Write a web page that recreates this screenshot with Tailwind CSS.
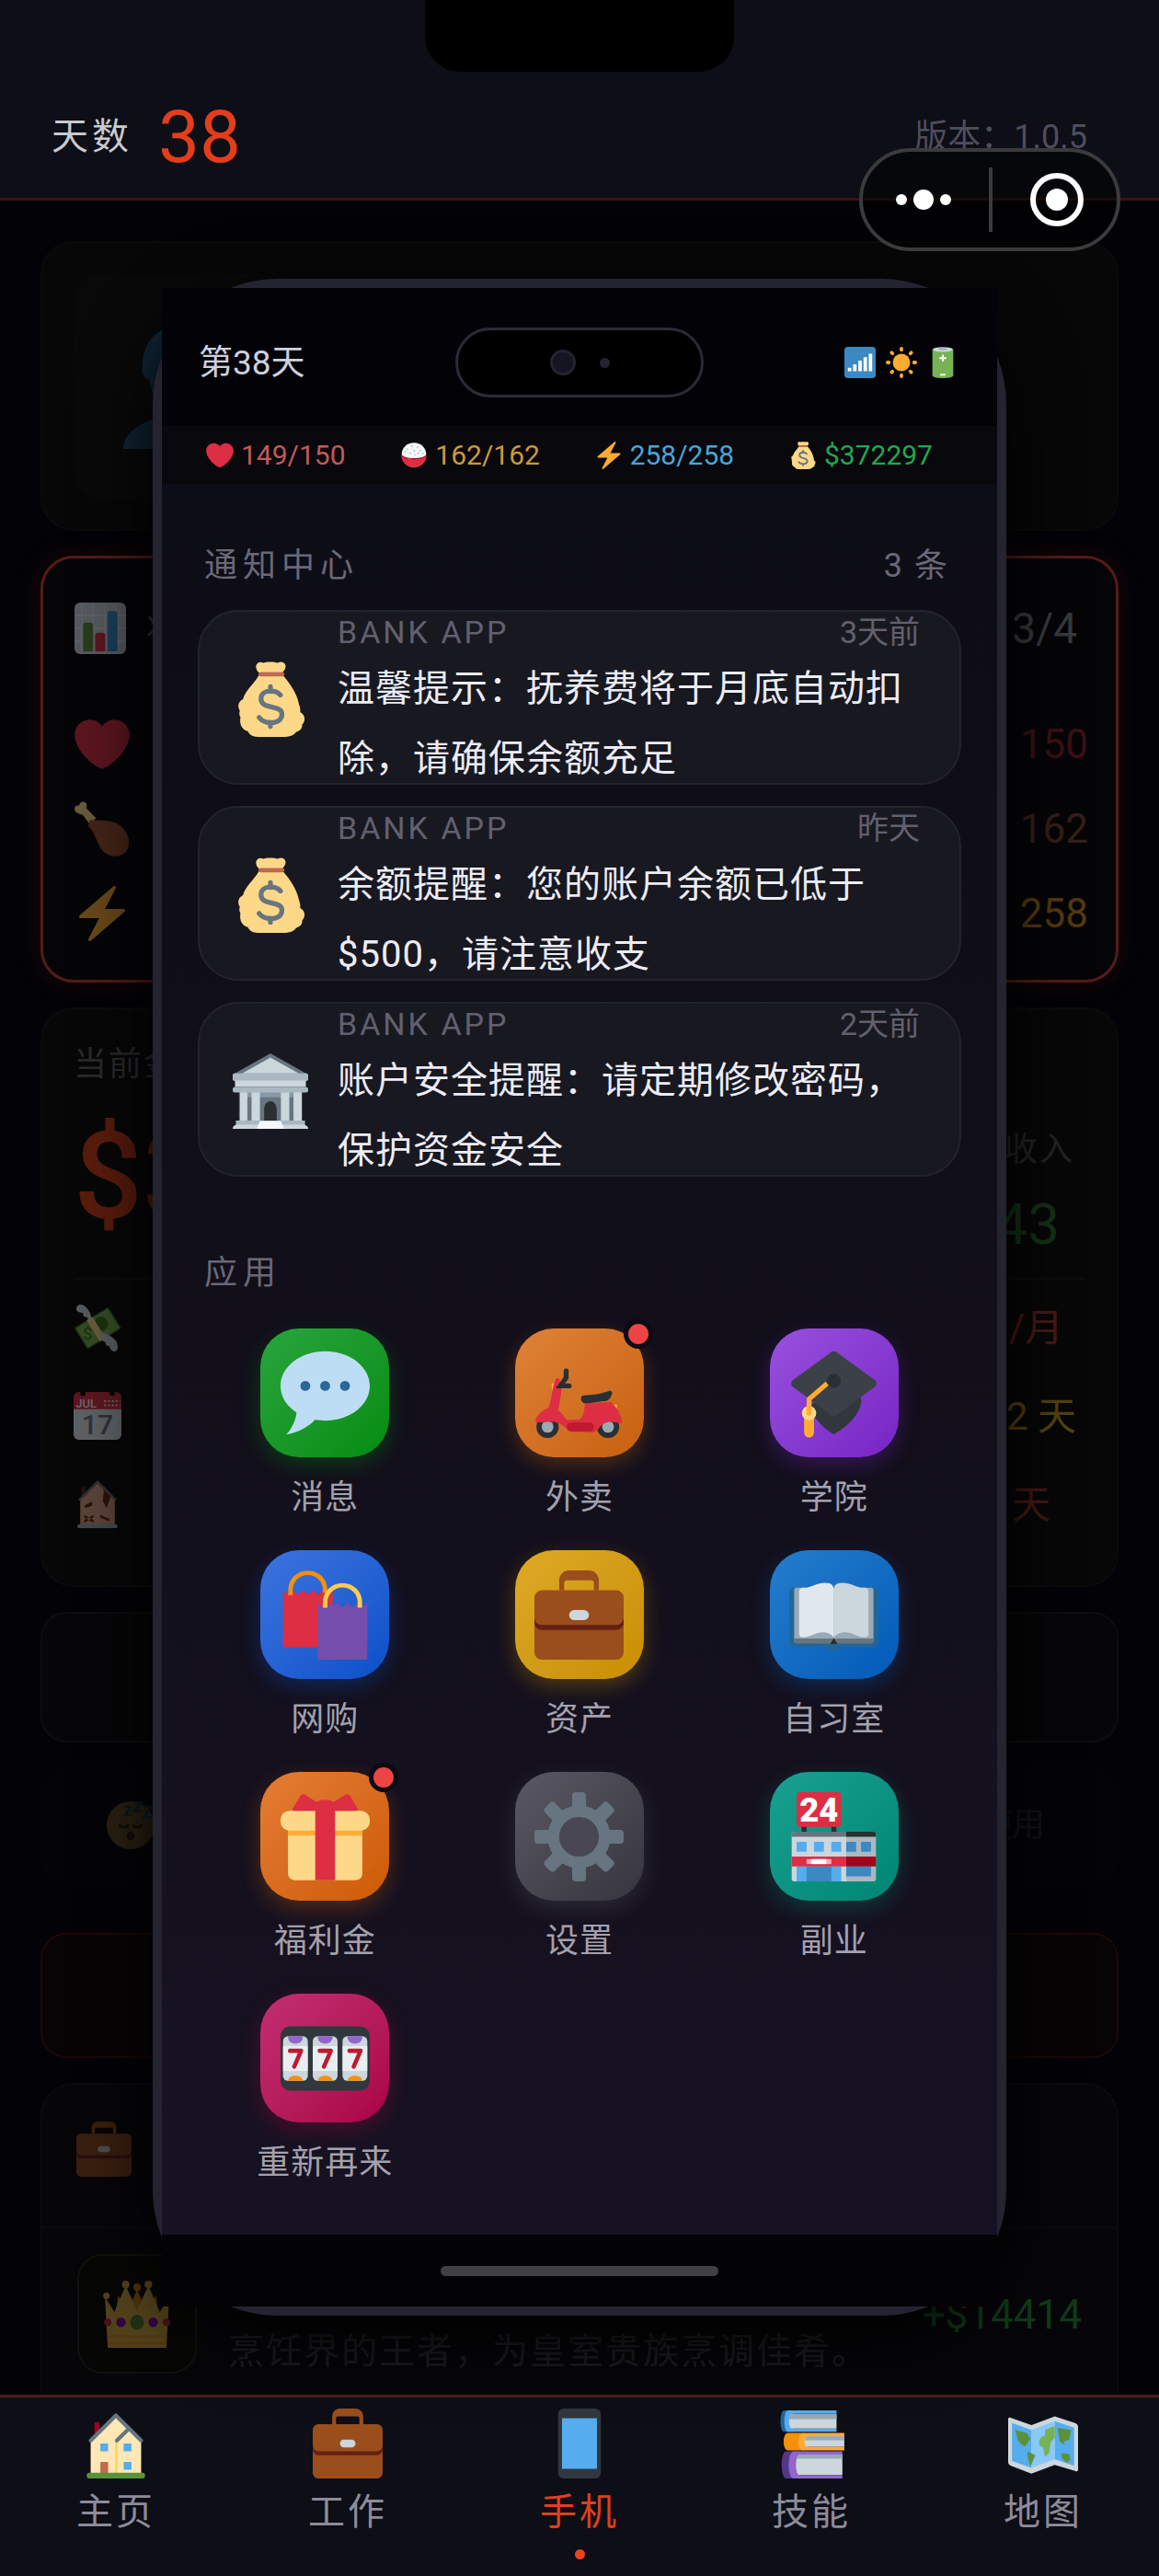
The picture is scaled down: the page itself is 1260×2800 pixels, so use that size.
<!DOCTYPE html>
<html lang="zh-CN">
<head>
<meta charset="utf-8">
<meta name="viewport" content="width=device-width, initial-scale=1">
<title>手机</title>
<script src="https://cdn.jsdelivr.net/npm/@tailwindcss/browser@4"></script>
</head>
<body class="bg-[#030307] font-[Roboto,'Noto_Sans_CJK_SC',sans-serif]">

<!-- Icon library -->
<svg class="hidden" aria-hidden="true">
  <symbol id="heart" viewBox="0 0 36 36"><path fill="#DD2E44" d="M35.885 11.833c0-5.45-4.418-9.868-9.867-9.868-3.308 0-6.227 1.633-8.018 4.129-1.791-2.496-4.71-4.129-8.017-4.129-5.45 0-9.868 4.417-9.868 9.868 0 .772.098 1.52.266 2.241C1.751 22.587 11.216 31.568 18 34.034c6.783-2.466 16.249-11.447 17.617-19.959.17-.721.268-1.469.268-2.242z"/></symbol>
  <symbol id="bolt" viewBox="0 0 36 36"><path fill="#FFAC33" d="M32.938 15.651C32.792 15.26 32.418 15 32 15H19.925L26.89 1.458c.219-.426.106-.947-.271-1.243C26.437.071 26.218 0 26 0c-.233 0-.466.082-.653.243L18 6.588 3.347 19.243c-.316.273-.43.714-.284 1.105S3.582 21 4 21h12.075L9.11 34.542c-.219.426-.106.947.271 1.243.182.144.401.215.619.215.233 0 .466-.082.653-.243L18 29.412l14.653-12.655c.317-.273.43-.714.285-1.106z"/></symbol>
  <symbol id="bag" viewBox="0 0 36 36"><path fill="#FDD888" d="M31.500 20c-.6-4-4-9.500-7.500-13.300H12.400C10.400 10.500 5.900 13.800 4.900 18c-2.300 1.200-2.800 3.500-1.500 5.600-.4 1.200-.3 2 .3 3-.6 3.300.6 5.900 3.500 6.700C8 35 9.500 36 12 36h13c2.500 0 4.300-1 5.300-2.400 1.900-.5 3-1.800 2.800-3.400 1.800-1.900 1.600-4.600-.9-6 .2-1.500-.2-2.800-.7-4.200z"/><path fill="#FDD888" d="M12.600 5.400c-1-.7-1.700-2.100-1.400-3.500C11.500.4 13.300-.2 14.600.7c.9-.7 5.800-.7 6.800 0 1.500-1 3.500-.5 3.800 1.200.2 1.400-.6 2.500-1.600 3.500z"/><path fill="#BF6952" d="M13.500 5h10c.7 0 1.200.4 1.200 1s-.5 1.100-1.200 1.100h-10c-.7 0-1.200-.5-1.200-1.100s.5-1 1.200-1z"/><path fill="none" stroke="#67757F" stroke-width="2.300" stroke-linecap="round" d="M18 12v2.300M18 29v2M22.800 16c-1.100-1.300-2.700-1.900-4.800-1.900-2.600 0-4.500 1.300-4.500 3.700 0 5.600 10 2.400 10 7.400 0 2.500-2.200 4-5.300 4-2.600 0-4.500-.9-5.600-2.500"/></symbol>
  <symbol id="rice" viewBox="0 0 36 36"><path fill="#F5F8FA" d="M2 17C2 8 9 1.500 18 1.500S34 8 34 17c0 4-7 6-16 6S2 21 2 17z"/><path fill="#DD2E44" d="M1.500 17.500C4 21 10 22.800 18 22.800s14-1.800 16.500-5.300C34.500 26 28 34 18 34S1.500 26 1.500 17.500z"/><path fill="#A0041E" d="M1.500 16.500C4 20 10 21.600 18 21.600s14-1.600 16.500-5.100v1.800C32 21.400 26 23 18 23S4 21.400 1.500 18.300z"/><path stroke="#AAB8C2" stroke-width="1.300" stroke-linecap="round" d="M9 9l1 1.500M16 5l-1 1.500M22 7h2M27 11l-1 1.500M18 11l1 1.500M12 15h2M6 14l1-1.500M24 16l-1-1.500M19 17h1M29 16l1-1"/></symbol>
  <symbol id="bank" viewBox="0 0 36 36"><path fill="#66757F" d="M1 9.500 18 0l17 9.500z"/><path fill="#CCD6DD" d="M4.500 9.500 18 2l13.500 7.500z"/><path fill="#66757F" d="M3 17h30v16H3z"/><path fill="#8899A6" d="M7 18h22v3H7z"/><path fill="#CCD6DD" d="M3.500 18H7v14.500H3.500zM9 18h4v14.500H9zM23 18h4v14.500h-4zM29 18h4v14.500h-4z"/><path fill="#292F33" d="M15 33v-6.500a3 3.700 0 0 1 6 0V33z"/><path fill="#CCD6DD" d="M0 10.600c0-.6.400-1 1-1h34c.6 0 1 .4 1 1v1.600c0 .6-.4 1-1 1h-.1V16H1.100v-2.800C.4 13.200 0 12.800 0 12.200z"/><path fill="#AAB8C2" d="M0 10.600c0-.6.400-1 1-1h34c.6 0 1 .4 1 1v1.400c0 .6-.4 1-1 1H1c-.6 0-1-.4-1-1zM0 17c0-.6.400-1 1-1h34c.6 0 1 .4 1 1v.7c0 .6-.4 1-1 1H1c-.6 0-1-.4-1-1z"/><path fill="#AAB8C2" d="M1.500 32h33v2.500h-33z"/><path fill="#CCD6DD" d="M0 35.500C.5 34.300 1.500 34 2.500 34h31c1 0 2 .3 2.500 1.500v.5H0z"/><path fill="#F5F8FA" d="M13 32.300h10l1.500 3.700h-13z"/></symbol>
  <symbol id="chat" viewBox="0 0 36 36"><path fill="#BDDDF4" d="M18 1C8.060 1 0 7.270 0 15c0 4.300 2.500 8.150 6.400 10.700C6.500 28 4.500 32.500 2.300 34.600c4-.5 8.900-2.900 11.600-5.900 1.300.2 2.700.3 4.100.3 9.940 0 18-6.270 18-14S27.940 1 18 1z"/><circle fill="#2A6797" cx="10" cy="15" r="2"/><circle fill="#2A6797" cx="18" cy="15" r="2"/><circle fill="#2A6797" cx="26" cy="15" r="2"/></symbol>
  <symbol id="scooter" viewBox="0 0 36 36"><circle fill="#292F33" cx="5.300" cy="31.500" r="4.500"/><circle fill="#99AAB5" cx="5.300" cy="31.500" r="2.400"/><circle fill="#292F33" cx="29.700" cy="31.500" r="4.500"/><circle fill="#99AAB5" cx="29.700" cy="31.500" r="2.400"/><path fill="#FFAC33" d="M7 14h2v2.500H7zM31 22.500h2.300v1.800H31z"/><path fill="#DD2E44" d="M8.600 12.300c.6-.8 1.600-.4 1.600.5l.8 3.700-1.400 8.500c1.300.6 2.500 2.800 3.500 3.700h4c2.700 0 3-3.200 3.300-6.700l10.400-.5c2.400 1.900 4.200 5 4.700 8.600l-2.800-.4c-3-.6-5 .1-7 2.700-1.700 2-3 1.200-5 1.200h-6c-2-1.500-3.500-3.500-6.500-4-2.500-.4-5 .3-7.800.1 0-3 3-5 5.300-5.900.7-1.600 1.500-6 1.900-8.700z"/><rect fill="#BE1931" x="13" y="29.800" width="11" height="3.500" rx="1.700"/><path fill="#292F33" d="M20 18.800c3.500 0 7-.5 10-1.700 1-.3 1.600.3 1.300 1.200-.6 1.800-1.500 2.800-3 2.900-3 .2-4.500.8-7.500.8-1.300 0-2-.7-2-1.700 0-1 .4-1.500 1.200-1.500z"/><path fill="none" stroke="#292F33" stroke-width="2" stroke-linecap="round" d="M12.800 9v2.700L10.500 15H14"/></symbol>
  <symbol id="cap" viewBox="0 0 36 36"><path fill="#31373D" d="M8 23l10-7 11 4c.5 5-4 10.500-11 14.500-4-2.200-8-6-10-11.500z"/><path fill="#3B4147" d="M16.800 1.500a1.700 1.700 0 0 1 2.400 0L34.600 12.700c.8.700.8 1.900 0 2.600L19.200 26.700c-.8.500-1.700.500-2.400 0L1.400 15.300c-.8-.7-.8-1.900 0-2.600z"/><circle fill="#292F33" cx="18" cy="13" r="2.800"/><path fill="none" stroke="#FFAC33" stroke-width="1.900" stroke-linejoin="round" d="M15.300 14 8 20.300V27"/><path fill="#FFAC33" d="M6 28h4v5.800a2 2 0 0 1-4 0z"/><circle fill="#FFD983" cx="8" cy="26" r="2.900"/><path fill="#FFAC33" d="M7 22h2v4a1 1 0 0 1-2 0z"/></symbol>
  <symbol id="shop" viewBox="0 0 36 36"><path fill="#DD2E44" d="M1 8l2 1.800L5 8l2 1.800L9 8l2 1.800L13 8l2 1.800L17 8l2 1.800L21 8v23H1z"/><path fill="none" stroke="#F4900C" stroke-width="1.800" d="M4 10V8C4 4 7 1 11 1s7 3 7 7v1"/><path fill="#744EAA" d="M15 13l2 1.800L19 13l2 1.800L23 13l2 1.800L27 13l2 1.800L31 13l2 1.800L35 13v23H15z"/><path fill="none" stroke="#FFCC4D" stroke-width="1.800" d="M18 15v-2c0-4 3-7 7-7s7 3 7 7v2"/></symbol>
  <symbol id="case" viewBox="0 0 36 36"><path fill="#9A4E1C" d="M26 8h-2V5c0-.6-.4-1-1-1H13c-.6 0-1 .4-1 1v3h-2V4c0-2.200 1.800-4 4-4h8c2.200 0 4 1.800 4 4z"/><path fill="#9A4E1C" d="M0 18h36v15a3 3 0 0 1-3 3H3a3 3 0 0 1-3-3z"/><path fill="#662113" d="M0 18h36v3c0 1.700-1.300 3-3 3H3c-1.700 0-3-1.300-3-3z"/><path fill="#9A4E1C" d="M36 19a3 3 0 0 1-3 3H3a3 3 0 0 1-3-3v-8a3 3 0 0 1 3-3h30a3 3 0 0 1 3 3z"/><rect fill="#CCD6DD" x="14" y="16" width="8" height="4" rx="2"/></symbol>
  <symbol id="book" viewBox="0 0 36 36"><path fill="#226699" d="M0 9c0-1.500 1-2 2-2h32c1 0 2 .5 2 2v20c0 1.500-1.200 2-2.500 2H21c0 .8-1 1.200-3 1.200s-3-.4-3-1.200H2.500C1.200 31 0 30.500 0 29z"/><path fill="#99AAB5" d="M2 8c0-.8.500-1 1-1h30c.5 0 1 .2 1 1v20.500c0 .500-.5.800-1 .8H3c-.5 0-1-.3-1-.8z"/><path fill="#66757F" d="M2 27.500h32v.800c0 .7-.4 1.200-1 1.200H3c-.6 0-1-.5-1-1.200z"/><path fill="#E1E8ED" d="M4 8.500C4 7.600 4.500 7 6 7c3 0 4.500-1.900 8.500-2C17 4.900 18 6 18 8v19c-1.500-1.500-2.500-2-4.500-2-3 0-5 2-8 2C4.500 27 4 26.500 4 25.500z"/><path fill="#CCD6DD" d="M32 8.500C32 7.600 31.500 7 30 7c-3 0-4.500-1.900-8.500-2C19 4.900 18 6 18 8v19c1.500-1.500 2.500-2 4.500-2 3 0 5 2 8 2 1 0 1.500-.5 1.500-1.500z"/><path fill="#292F33" d="M18 27.300l1.500 2.400h-3z"/></symbol>
  <symbol id="gift" viewBox="0 0 36 36"><path fill="#FDD888" d="M3 14h30v18.500c0 2-1 3-3 3H6c-2 0-3-1-3-3z"/><path fill="#FFAC33" d="M3 14h30v3.500H3z"/><rect fill="#FDD888" y="7.500" width="36" height="8" rx="3.600"/><path fill="#DD2E44" d="M14 7.500h8v28h-8zM5 6.500 8 1.600c.6-1 1.700-1 2.600-.2L14.500 4c1.500-1.300 5.500-1.300 7 0l4-2.600c.9-.8 2-.8 2.600.2L31 6.500c.5 1-.2 1-1 1H6c-.8 0-1.500 0-1-1z"/></symbol>
  <symbol id="gear" viewBox="0 0 36 36"><g fill="#66757F"><rect x="15.200" width="5.600" height="36" rx="1.500"/><rect y="15.200" width="36" height="5.600" rx="1.500"/><rect x="15.200" y="0" width="5.600" height="36" rx="1.500" transform="rotate(45 18 18)"/><rect x="15.200" y="0" width="5.600" height="36" rx="1.500" transform="rotate(-45 18 18)"/><circle cx="18" cy="18" r="12.700"/></g><circle fill="#484753" cx="18" cy="18" r="8"/></symbol>
  <symbol id="store" viewBox="0 0 36 36"><path fill="#292F33" d="M5 13h2v4H5zM17 13h2v4h-2z"/><rect fill="#DD2E44" x="3" width="18" height="14" rx="1.500"/><text class="tracking-normal" x="12" y="12" text-anchor="middle" font-family="Roboto,sans-serif" font-weight="900" font-size="13.500" fill="#fff">24</text><path fill="#CCD6DD" d="M1 17c0-.6.400-1 1-1h21v20H2c-.6 0-1-.4-1-1z"/><path fill="#AAB8C2" d="M23 16h11c.6 0 1 .4 1 1v18c0 .6-.4 1-1 1H23z"/><path fill="#66757F" d="M1 18v-1c0-.6.400-1 1-1h21v2z"/><path fill="#292F33" d="M23 16h11c.6 0 1 .4 1 1v1H23z"/><path fill="#55ACEE" d="M3 20h4v4H3zM10 20h4v4h-4zM17 20h4v4h-4zM3 30h18v6H3z"/><path fill="#3B88C3" d="M23 20h4v4h-4zM29 20h4v4h-4zM23 30h10v4H23zM7 30h10v6H7z"/><path fill="#DD2E44" d="M1 26h22v4H1z"/><path fill="#A0041E" d="M23 26h12v4H23z"/><path fill="#F4ABBA" d="M7 27h10v2H7z"/><path fill="#fff" d="M9 27h6v2H9z"/></symbol>
  <symbol id="slot" viewBox="0 0 36 36"><rect fill="#31373D" y="5" width="36" height="26" rx="4"/><g id="reel"><rect fill="#CCD6DD" x="1" y="9" width="10" height="18" rx="2"/><path fill="#F5F8FA" opacity=".7" d="M1 13h10v10H1z"/><path fill="#9266CC" d="M3 9h6c0 2-1.200 3-3 3s-3-1-3-3z"/><path fill="#F4900C" d="M3 27c.3-1.400 1.400-2 3-2s2.700.6 3 2z"/><path fill="none" stroke="#BE1931" stroke-width="1.700" stroke-linecap="round" stroke-linejoin="round" d="M3.800 14.900h4.500L5.500 21.300"/></g><use href="#reel" x="12"/><use href="#reel" x="24"/></symbol>
  <symbol id="signal" viewBox="0 0 36 36"><rect fill="#3B88C3" width="36" height="36" rx="4"/><path fill="#fff" d="M4 24h4v4H4zM10 20h4v8h-4zM16 16h4v12h-4zM22 12h4v16h-4zM28 8h4v20h-4z"/></symbol>
  <symbol id="sun" viewBox="0 0 36 36"><circle fill="#FFAC33" cx="18" cy="18" r="10"/><path stroke="#FFAC33" stroke-width="4" stroke-linecap="round" d="M18 2v1.500M18 32.500V34M2 18h1.500M32.500 18H34M6.700 6.700l1 1M28.300 28.300l1 1M6.700 29.300l1-1M28.300 7.700l1-1"/></symbol>
  <symbol id="battery" viewBox="0 0 36 36"><path fill="#77B255" d="M6 3h24v30c0 1.700-5 3-12 3S6 34.700 6 33z"/><ellipse fill="#CCD6DD" cx="18" cy="3" rx="11.500" ry="2.700"/><ellipse fill="#9AAAB4" cx="18" cy="2.500" rx="5" ry="1.300"/><path fill="#fff" d="M17 9h2v3h3v2h-3v3h-2v-3h-3v-2h3zM15 31h6v2h-6z"/></symbol>
  <symbol id="person" viewBox="0 0 36 36"><path fill="#269" d="M24 26.800v-2.600c3-2 4-5 4.500-8.200 1.500-.3 2.500-2 2-4C30.500 5 25.500 0 18 0S5.500 5 5.500 12c-.5 2 .5 3.700 2 4 .5 3.200 1.500 6.200 4.500 8.200v2.600C6 27.500 0 31 0 36h36c0-5-6-8.500-12-9.200z"/></symbol>
  <symbol id="chart" viewBox="0 0 36 36"><rect fill="#CCD6DD" width="36" height="36" rx="4"/><path stroke="#E1E8ED" stroke-width="1.200" d="M5 0v36M13 0v36M21 0v36M29 0v36M0 9h36M0 18h36M0 27h36"/><path fill="#5C913B" d="M6 16a2 2 0 0 1 2-2h3a2 2 0 0 1 2 2v18H6z"/><path fill="#DD2E44" d="M14.500 23a2 2 0 0 1 2-2h3a2 2 0 0 1 2 2v11h-7z"/><path fill="#3B94D9" d="M23 8a2 2 0 0 1 2-2h3a2 2 0 0 1 2 2v26h-7z"/></symbol>
  <symbol id="meat" viewBox="0 0 36 36"><path fill="#FFD983" d="M0 5c0-2 1.500-2.500 3-2.300C3.200.8 5 0 6.500.4 8.500 1 8 3 7.700 4.500L14 11l-4 4-4.500-6C3.500 8.500 0 7.500 0 5z"/><path fill="#A0522D" d="M10 12c4 1 14-1 20 4 4.500 3.500 6.500 9 5 14-2 6-9 7.500-14.500 4C14.500 30 15 22 9 16z"/></symbol>
  <symbol id="money" viewBox="0 0 36 36"><g transform="rotate(-32 18 18)"><rect fill="#3E721D" x="3" y="9" width="30" height="19" rx="1.500"/><rect fill="#77B255" x="4" y="10" width="28" height="17"/><ellipse fill="#3E721D" cx="22" cy="17" rx="5" ry="5.500"/><path fill="#FFD983" d="M14 9h5v19h-5z"/></g><text x="7" y="27" font-family="Roboto,sans-serif" font-size="13" fill="#3E721D">$</text><path fill="#CCD6DD" d="M2 4C2 1 5 0 7 1c4 2 6 6 7 12-2 1-3-1-4-3-2 1-3-1-3-3-2 0-5-1-5-3zM20 22c4 0 8 2 11 5 3 3 3 9 0 9-2 0-4-2-4-4-2 0-3-1-3-3-3-1-5-4-4-7z"/></symbol>
  <symbol id="cal" viewBox="0 0 36 36"><path fill="#E0E7EC" d="M36 32a4 4 0 0 1-4 4H4a4 4 0 0 1-4-4V9h36z"/><path fill="#DD2E44" d="M4 0h28a4 4 0 0 1 4 4v9H0V4a4 4 0 0 1 4-4z"/><circle cx="7" cy="1" r="2"/><circle cx="29" cy="1" r="2"/><text x="1.500" y="11.500" font-family="Roboto,sans-serif" font-weight="500" font-size="9" fill="#F5F8FA">JUL</text><path stroke="#F5F8FA" stroke-width="1.400" stroke-dasharray="1.400 1.500" d="M23 7h12M23 10h12"/><text x="18" y="32" text-anchor="middle" font-family="Roboto,sans-serif" font-weight="500" font-size="21" fill="#66757F">17</text></symbol>
  <symbol id="ruin" viewBox="0 0 36 36"><path fill="#D99E82" d="M5 15 18 2l13 13v19H5z"/><path fill="#662113" d="M6 5h3v7H6zM23 4l5 8-3 9-3-5zM8 19l6-3v3l-5 2zM8 26l7 4v2l-7-4zM15 26l-7 4v2l7-4zM20 26l7 3v2l-7-3z"/><path fill="none" stroke="#66757F" stroke-width="1.500" d="M4 15 18 1l14 14"/><rect fill="#99AAB5" x="3" y="33" width="30" height="3" rx="1"/></symbol>
  <symbol id="sleep" viewBox="0 0 36 36"><circle fill="#FFCC4D" cx="18" cy="18" r="18"/><path fill="none" stroke="#664500" stroke-width="2" stroke-linecap="round" d="M10 18c1 2 5 2 6 0M20 18c1 2 5 2 6 0"/><ellipse fill="#664500" cx="18" cy="26" rx="3" ry="3.500"/><path fill="none" stroke="#3B88C3" stroke-width="1.800" d="M14 4h4l-4 6h4M21 1h5l-5 6h5M28 4h6l-6 8h6"/></symbol>
  <symbol id="crown" viewBox="0 0 36 36"><path fill="#F4900C" d="M8 8l5 9 5-12 5 12 5-9 2 15H6z"/><circle fill="#F4900C" cx="18" cy="4" r="2"/><path fill="#FFCC4D" d="M1 9l5 8L12 3l6 13L24 3l6 14 5-8-1.500 27h-31z"/><circle fill="#FFCC4D" cx="12" cy="2.500" r="2"/><circle fill="#FFCC4D" cx="24" cy="2.500" r="2"/><circle fill="#FFCC4D" cx="1.800" cy="8.500" r="1.700"/><circle fill="#FFCC4D" cx="34.200" cy="8.500" r="1.700"/><path stroke="#FFAC33" stroke-width="1.500" d="M3 30h30M3 33.500h30"/><ellipse fill="#5C913B" cx="18" cy="22.500" rx="3.600" ry="4"/><circle fill="#9400e0" cx="9.500" cy="22.500" r="2.500"/><circle fill="#9400e0" cx="26.500" cy="22.500" r="2.500"/><circle fill="#DD2E44" cx="2.500" cy="22.500" r="2"/><circle fill="#DD2E44" cx="33.500" cy="22.500" r="2"/></symbol>
  <symbol id="home" viewBox="0 0 36 36"><path fill="#A0041E" d="M7 7h2.500v9H7z"/><path fill="#FFE8B6" d="M5 16 18 4l7 7 6 6v17H5z"/><path fill="#FFCC4D" d="M17.700 17h1v17h-1z"/><path fill="none" stroke="#66757F" stroke-width="2" stroke-linecap="round" stroke-linejoin="round" d="M5 16.500 18 3.500l13 13M18.500 16.500l6-6"/><path fill="#55ACEE" d="M10 18h4v4h-4zM22 18h4v4h-4zM22 27.500h4v4h-4z"/><path fill="#C1694F" d="M10 27.500h4V34h-4z"/><rect fill="#5C913B" x="3" y="33" width="30" height="3" rx="1.300"/></symbol>
  <symbol id="phone" viewBox="0 0 36 36"><rect fill="#31373D" x="7" width="22" height="36" rx="3"/><path fill="#55ACEE" d="M9 5h18v26H9z"/></symbol>
  <symbol id="books" viewBox="0 0 36 36"><path fill="#226699" d="M4 1h5v11H4C1.500 12 1.500 1 4 1z"/><path fill="#55ACEE" d="M6 1h25v1.700H8v7.700h23V12H6C3.500 12 3.500 1 6 1z"/><path fill="#CCD6DD" d="M8 3h23v7.300H8C6 10.300 6 3 8 3z"/><path fill="#99AAB5" d="M8 3h23v2.500H6.500C6.800 4 7.200 3 8 3z"/><path fill="#F4900C" d="M6 12.500h8v9H6c-3 0-3-9 0-9z"/><path fill="#FFAC33" d="M14 12.500h21v1.800H16v5.400h19v1.800H14c-3.500 0-3.500-9 0-9z"/><path fill="#CCD6DD" d="M16 14.300h19v5.400H16c-2 0-2-5.400 0-5.400z"/><path fill="#99AAB5" d="M16 14.300h19v2H14.700c.2-1.200.6-2 1.300-2z"/><path fill="#553788" d="M5 22h6v14H5c-3 0-3-14 0-14z"/><path fill="#9266CC" d="M9 22h25v1.800H12v10.500h22V36H9c-3.500 0-3.500-14 0-14z"/><path fill="#CCD6DD" d="M12 23.800h22v10.400H12c-2.500 0-2.500-10.400 0-10.400z"/><path fill="#99AAB5" d="M12 23.800h22v2H10.500c.3-1.200.8-2 1.500-2z"/></symbol>
  <symbol id="map" viewBox="0 0 36 36"><path fill="#CCD6DD" d="M0 5.500c0-1 1-1 2-.5l10 3.500L24 4l10.500 3.500c1 .4 1.500 1 1.500 2v22c0 1-1 1-2 .5L24 29l-12 4.500L1.500 29.500C.5 29 0 28.500 0 27.500z"/><path fill="#55ACEE" d="M2 7.500 12 11v19.500L2 27zM24 6.500l10 3.300V29.500L24 26z"/><path fill="#88C9F9" d="M12 11l12-4.500V26l-12 4.500z"/><path fill="#5C913B" d="M3.500 11l6 1.500 2 3c-1 1-1.500 3-3 4-2-1-4-3-4-5.500zM10 22l4 2-2.500 6-1.500-5zM25.500 10l7 1-1 5-3 1 1 2-3-2z"/><path fill="#77B255" d="M19 11l5-2v6l-2 2-1 6-2 2-1-5-2-1c-.5-3 1-5 3-5z"/><path fill="#5C913B" d="M27.500 23l4 .5.500 3-2 1.500-2.500-2.500z"/></symbol>
</svg>

<div class="relative flex min-h-screen flex-col overflow-hidden">

  <header class="relative flex h-[218px] items-end justify-between border-b-3 border-[#3a1513] bg-[#0d0e16] px-[56px] pb-[18px]">
    <div class="absolute top-0 left-1/2 h-[78px] w-[336px] -translate-x-1/2 rounded-b-[38px] bg-black"></div>
    <div class="flex items-center gap-[28px]">
      <span class="text-[40px] leading-[96px] tracking-[4px] text-[#c9c9ce]">天数</span>
      <strong class="text-[80px] leading-[96px] font-normal text-[#e33d1c]">38</strong>
    </div>
    <span class="pr-[22px] text-[36px] leading-[96px] text-[#4f4d5c]">版本：1.0.5</span>
  </header>

  <main class="flex flex-1 flex-col gap-[27px] px-[44px] pt-[44px]">
    <section class="h-[315px] rounded-[36px] border-2 border-[#0b0b0c] bg-[#070708] p-[34px]">
      <div class="flex h-[244px] w-[244px] items-center justify-center rounded-[28px] bg-[#09090a]">
        <svg class="h-[136px] w-[136px] opacity-30"><use href="#person"/></svg>
      </div>
    </section>

    <section class="rounded-[36px] border-3 border-[#531c1a] bg-[#050508] pt-[46px] pr-[30px] pb-[26px] pl-[34px] shadow-[0_0_24px_#1c0607]">
      <div class="mb-[50px] flex h-[60px] items-center justify-between">
        <div class="flex items-center gap-[22px]"><svg class="h-[56px] w-[56px] opacity-40"><use href="#chart"/></svg><h2 class="text-[38px] text-[#333335]">状态</h2></div>
        <span class="pr-[12px] text-[46px] text-[#3a3a3c]">3/4</span>
      </div>
      <div class="flex h-[92px] items-center justify-between text-[44px] text-[#3d1015]"><svg class="h-[60px] w-[60px] opacity-40"><use href="#heart"/></svg><span class="flex gap-[16px]"><span>/</span>150</span></div>
      <div class="flex h-[92px] items-center justify-between text-[44px] text-[#33201a]"><svg class="h-[60px] w-[60px] opacity-40"><use href="#meat"/></svg><span class="flex gap-[16px]"><span>/</span>162</span></div>
      <div class="flex h-[92px] items-center justify-between text-[44px] text-[#55380f]"><svg class="h-[60px] w-[60px] opacity-40"><use href="#bolt"/></svg><span class="flex gap-[16px]"><span>/</span>258</span></div>
    </section>

    <section class="rounded-[36px] border-2 border-[#0b0b0c] bg-[#070708] px-[34px] pt-[38px] pb-[40px]">
      <h2 class="text-[36px] leading-[44px] tracking-[2px] text-[#2a2a2b]">当前金</h2>
      <div class="mt-[20px] mb-[4px] flex justify-between border-b-2 border-[#0d0d0e] pb-[18px]">
        <strong class="text-[132px] leading-[160px] font-medium text-[#5a1c0d]">$3</strong>
        <div class="flex flex-col items-end gap-[16px] pt-[26px] pr-[12px]">
          <span class="text-[36px] leading-[50px] tracking-[2px] text-[#242425]">收入</span>
          <span class="pr-[16px] text-[62px] leading-[80px] text-[#143216]">43</span>
        </div>
      </div>
      <div class="flex h-[96px] items-center justify-between text-[42px] text-[#4a1a1a]"><svg class="h-[52px] w-[52px] opacity-40"><use href="#money"/></svg><span class="pr-[24px]">/月</span></div>
      <div class="flex h-[96px] items-center justify-between text-[42px] text-[#524312]"><svg class="h-[52px] w-[52px] opacity-40"><use href="#cal"/></svg><span class="pr-[10px]">2 天</span></div>
      <div class="flex h-[96px] items-center justify-between text-[42px] text-[#451716]"><svg class="h-[52px] w-[52px] opacity-40"><use href="#ruin"/></svg><span class="pr-[38px]">天</span></div>
    </section>

    <section class="h-[142px] rounded-[28px] border-2 border-[#0e0c0e] bg-[#060507]"></section>

    <section class="mb-[27px] flex h-[126px] items-center justify-between rounded-[28px] bg-[#040408] pr-[80px] pl-[72px]">
      <svg class="h-[52px] w-[52px] opacity-15"><use href="#sleep"/></svg><span class="text-[36px] text-[#121215]">使用</span>
    </section>

    <section class="h-[136px] rounded-[28px] border-2 border-[#1d0808] bg-[#070406]"></section>

    <section class="flex-1 rounded-t-[36px] border-2 border-b-0 border-[#0b0b0e] bg-[#060609]">
      <div class="flex h-[156px] items-start border-b-2 border-[#0b0b0e] px-[37px] pt-[40px]"><svg class="h-[60px] w-[60px] opacity-35"><use href="#case"/></svg></div>
      <div class="flex gap-[34px] px-[38px] pt-[28px]">
        <div class="flex h-[130px] w-[130px] shrink-0 items-center justify-center rounded-[28px] border-2 border-[#12110e] bg-[#060605]"><svg class="h-[74px] w-[74px] opacity-30"><use href="#crown"/></svg></div>
        <div class="flex-1">
          <div class="pt-[40px] text-right text-[44px] leading-[52px] text-[#0f3a1a]">+$14414</div>
          <p class="-mt-[8px] text-[39px] leading-[44px] tracking-[2px] text-[#1c1c1f]">烹饪界的王者，为皇室贵族烹调佳肴。</p>
        </div>
      </div>
    </section>
  </main>

  <nav class="relative grid h-[197px] grid-cols-5 border-t-3 border-[#46201b] bg-[#0d0e16] pt-[12px] text-[40px] text-[#8d8b9b]">
    <a href="#" class="flex flex-col items-center gap-[10px]"><svg class="h-[76px] w-[76px]"><use href="#home"/></svg><span class="leading-[54px] tracking-[3px]">主页</span></a>
    <a href="#" class="flex flex-col items-center gap-[10px]"><svg class="h-[76px] w-[76px]"><use href="#case"/></svg><span class="leading-[54px] tracking-[3px]">工作</span></a>
    <a href="#" aria-current="page" class="flex flex-col items-center gap-[10px] text-[#e04020]"><svg class="h-[76px] w-[76px]"><use href="#phone"/></svg><span class="leading-[54px] tracking-[3px]">手机</span><i class="mt-[3px] h-[11px] w-[11px] rounded-full bg-[#e8431f]"></i></a>
    <a href="#" class="flex flex-col items-center gap-[10px]"><svg class="h-[76px] w-[76px]"><use href="#books"/></svg><span class="leading-[54px] tracking-[3px]">技能</span></a>
    <a href="#" class="flex flex-col items-center gap-[10px]"><svg class="h-[76px] w-[76px]"><use href="#map"/></svg><span class="leading-[54px] tracking-[3px]">地图</span></a>
  </nav>

  <!-- In-game handset, floating over the page -->
  <div class="absolute inset-x-[166px] top-[303px] rounded-[136px] border-10 border-[#242330] bg-[#242330] shadow-[0_20px_80px_#000000]">
    <div class="relative flex h-[150px] items-center justify-between bg-[#030307] px-[40px]">
      <span class="pt-[14px] text-[37px] text-[#cfcfdf]">第38天</span>
      <div class="absolute top-[43px] left-1/2 flex h-[76px] w-[270px] -translate-x-1/2 items-center justify-center gap-[26px] rounded-full border-3 border-[#2b2a38] bg-black">
        <i class="h-[28px] w-[28px] rounded-full border-3 border-[#242330] bg-[#151521]"></i><i class="h-[11px] w-[11px] rounded-full bg-[#242330]"></i>
      </div>
      <div class="flex gap-[11px] pt-[12px] pr-[2px]"><svg class="h-[34px] w-[34px]"><use href="#signal"/></svg><svg class="h-[34px] w-[34px]"><use href="#sun"/></svg><svg class="h-[34px] w-[34px]"><use href="#battery"/></svg></div>
    </div>
    <div class="flex h-[63px] items-center justify-between bg-[#08080d] pr-[70px] pl-[48px] text-[30px]">
      <span class="flex items-center gap-[8px] text-[#c25a5a]"><svg class="h-[30px] w-[30px]"><use href="#heart"/></svg>149/150</span>
      <span class="flex items-center gap-[8px] text-[#cb9a3a]"><svg class="h-[30px] w-[30px]"><use href="#rice"/></svg>162/162</span>
      <span class="flex items-center gap-[8px] text-[#4aa5d8]"><svg class="h-[30px] w-[30px]"><use href="#bolt"/></svg>258/258</span>
      <span class="flex items-center gap-[8px] text-[#22a850]"><svg class="h-[30px] w-[30px]"><use href="#bag"/></svg>$372297</span>
    </div>

    <div class="bg-linear-to-b from-[#0d0d16] via-[#120f1b] to-[#171222] px-[39px] pt-[64px] pb-[54px]">
      <div class="mb-[23px] flex items-center justify-between px-[7px] text-[36px] leading-[50px] text-[#6a6877]"><h2 class="tracking-[6px]">通知中心</h2><span class="pr-[6px] tracking-[2px]">3 条</span></div>

      <div class="flex flex-col gap-[23px]">
        <article class="flex rounded-[44px] border-2 border-[#23232d] bg-[#181820] pt-[4px] pr-[43px] pl-[36px]">
          <svg class="mr-[32px] h-[82px] w-[82px] shrink-0 self-center"><use href="#bag"/></svg>
          <div class="flex-1">
            <div class="flex justify-between text-[34px] leading-[36px] text-[#62606f]"><span class="tracking-[3px]">BANK APP</span><time>3天前</time></div>
            <p class="mt-[6px] -mb-[12px] text-[40px] leading-[76px] tracking-[1px] text-[#ececf6]">温馨提示：抚养费将于月底自动扣除，请确保余额充足</p>
          </div>
        </article>
        <article class="flex rounded-[44px] border-2 border-[#23232d] bg-[#181820] pt-[4px] pr-[43px] pl-[36px]">
          <svg class="mr-[32px] h-[82px] w-[82px] shrink-0 self-center"><use href="#bag"/></svg>
          <div class="flex-1">
            <div class="flex justify-between text-[34px] leading-[36px] text-[#62606f]"><span class="tracking-[3px]">BANK APP</span><time>昨天</time></div>
            <p class="mt-[6px] -mb-[12px] text-[40px] leading-[76px] tracking-[1px] text-[#ececf6]">余额提醒：您的账户余额已低于 $500，请注意收支</p>
          </div>
        </article>
        <article class="flex rounded-[44px] border-2 border-[#23232d] bg-[#181820] pt-[4px] pr-[43px] pl-[36px]">
          <svg class="mr-[32px] h-[82px] w-[82px] shrink-0 self-center"><use href="#bank"/></svg>
          <div class="flex-1">
            <div class="flex justify-between text-[34px] leading-[36px] text-[#62606f]"><span class="tracking-[3px]">BANK APP</span><time>2天前</time></div>
            <p class="mt-[6px] -mb-[12px] text-[40px] leading-[76px] tracking-[1px] text-[#ececf6]">账户安全提醒：请定期修改密码，保护资金安全</p>
          </div>
        </article>
      </div>

      <h2 class="mt-[80px] mb-[35px] px-[7px] text-[36px] leading-[50px] tracking-[6px] text-[#6a6877]">应用</h2>

      <div class="grid grid-cols-3 gap-y-[33px] text-[36px] leading-[48px] tracking-[1px] text-[#a3a1ae]">
        <button class="flex flex-col items-center gap-[20px]"><span class="flex h-[140px] w-[140px] items-center justify-center rounded-[42px] bg-linear-to-br from-[#28a53c] to-[#038c0e] shadow-[0_8px_22px_#038c0e55]"><svg class="h-[97px] w-[97px]"><use href="#chat"/></svg></span>消息</button>
        <button class="flex flex-col items-center gap-[20px]"><span class="relative flex h-[140px] w-[140px] items-center justify-center rounded-[42px] bg-linear-to-br from-[#de8237] to-[#c8600c] shadow-[0_8px_22px_#c8600c55]"><svg class="h-[97px] w-[97px]"><use href="#scooter"/></svg><i class="absolute -top-[10px] -right-[10px] h-[32px] w-[32px] rounded-full border-5 border-[#0b0b12] bg-[#ef4444]"></i></span>外卖</button>
        <button class="flex flex-col items-center gap-[20px]"><span class="flex h-[140px] w-[140px] items-center justify-center rounded-[42px] bg-linear-to-br from-[#9850de] to-[#7723c4] shadow-[0_8px_22px_#7723c455]"><svg class="h-[97px] w-[97px]"><use href="#cap"/></svg></span>学院</button>
        <button class="flex flex-col items-center gap-[20px]"><span class="flex h-[140px] w-[140px] items-center justify-center rounded-[42px] bg-linear-to-br from-[#3c74de] to-[#0850c8] shadow-[0_8px_22px_#0850c855]"><svg class="h-[97px] w-[97px]"><use href="#shop"/></svg></span>网购</button>
        <button class="flex flex-col items-center gap-[20px]"><span class="flex h-[140px] w-[140px] items-center justify-center rounded-[42px] bg-linear-to-br from-[#deaa26] to-[#c88e00] shadow-[0_8px_22px_#c88e0055]"><svg class="h-[97px] w-[97px]"><use href="#case"/></svg></span>资产</button>
        <button class="flex flex-col items-center gap-[20px]"><span class="flex h-[140px] w-[140px] items-center justify-center rounded-[42px] bg-linear-to-br from-[#257dcc] to-[#005ab8] shadow-[0_8px_22px_#005ab855]"><svg class="h-[97px] w-[97px]"><use href="#book"/></svg></span>自习室</button>
        <button class="flex flex-col items-center gap-[20px]"><span class="relative flex h-[140px] w-[140px] items-center justify-center rounded-[42px] bg-linear-to-br from-[#e37d33] to-[#ce5a00] shadow-[0_8px_22px_#ce5a0055]"><svg class="h-[97px] w-[97px]"><use href="#gift"/></svg><i class="absolute -top-[10px] -right-[10px] h-[32px] w-[32px] rounded-full border-5 border-[#0b0b12] bg-[#ef4444]"></i></span>福利金</button>
        <button class="flex flex-col items-center gap-[20px]"><span class="flex h-[140px] w-[140px] items-center justify-center rounded-[42px] bg-linear-to-br from-[#595864] to-[#37363f] shadow-[0_8px_22px_#59586455]"><svg class="h-[97px] w-[97px]"><use href="#gear"/></svg></span>设置</button>
        <button class="flex flex-col items-center gap-[20px]"><span class="flex h-[140px] w-[140px] items-center justify-center rounded-[42px] bg-linear-to-br from-[#18a091] to-[#008672] shadow-[0_8px_22px_#00867255]"><svg class="h-[97px] w-[97px]"><use href="#store"/></svg></span>副业</button>
        <button class="flex flex-col items-center gap-[20px]"><span class="flex h-[140px] w-[140px] items-center justify-center rounded-[42px] bg-linear-to-br from-[#c22e72] to-[#aa0046] shadow-[0_8px_22px_#aa004655]"><svg class="h-[97px] w-[97px]"><use href="#slot"/></svg></span>重新再来</button>
      </div>
    </div>

    <div class="flex h-[78px] items-center justify-center bg-[#030306]"><i class="h-[11px] w-[302px] rounded-full bg-[#404042]"></i></div>
  </div>

  <!-- Mini-program capsule -->
  <div class="absolute top-[161px] right-[42px] flex h-[112px] w-[284px] items-center justify-between rounded-full border-4 border-[#3b3b3d] bg-black/50 px-[36px]">
    <button aria-label="更多" class="flex items-center gap-[7px]"><i class="h-[12px] w-[12px] rounded-full bg-white"></i><i class="h-[22px] w-[22px] rounded-full bg-white"></i><i class="h-[12px] w-[12px] rounded-full bg-white"></i></button>
    <span class="h-[70px] w-[4px] bg-[#3b3b3d]"></span>
    <button aria-label="关闭" class="flex h-[58px] w-[58px] items-center justify-center rounded-full border-6 border-white"><i class="h-[24px] w-[24px] rounded-full bg-white"></i></button>
  </div>
</div>
</body>
</html>
